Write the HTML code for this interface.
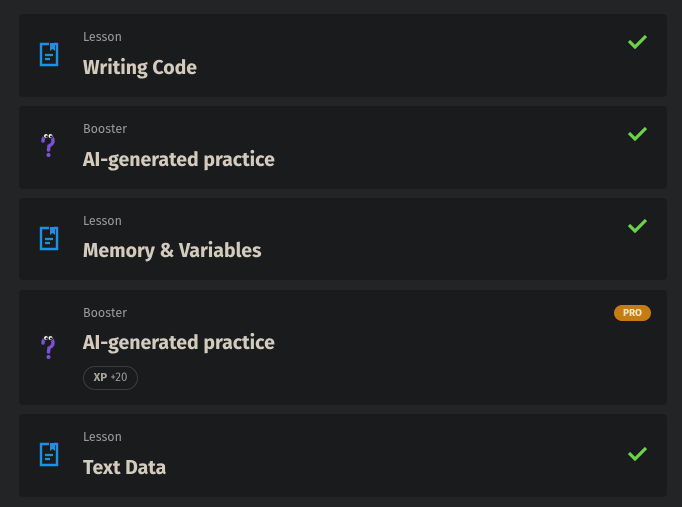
<!DOCTYPE html>
<html><head><style>
body{margin:0;background:#232426;width:682px;height:507px;overflow:hidden;font-family:"Fira Sans","Liberation Sans",sans-serif;position:relative}
.c{position:absolute;left:19px;width:648px;background:#1a1b1d;border-radius:4px}
.lab{position:absolute;left:64px;font-size:12.5px;color:#9a9a98}
.t{position:absolute;left:64px;font-size:19.5px;font-weight:bold;color:#d3cbbd;letter-spacing:0}
.ic{position:absolute;left:20px}
.ck{position:absolute;right:18px}
</style></head><body>
<svg width="0" height="0" style="position:absolute"><defs>
<g id="doc"><path d="M3 2 H10 M15 2 H18 V23 H2 V2 H3" fill="none" stroke="#1e90e0" stroke-width="2.4"/><path d="M11 1 H16 V9 L13.5 7 L11 9 Z" fill="#1e90e0"/><path d="M6 13 H14 M6 17 H11" stroke="#1e90e0" stroke-width="2.2"/></g>
<g id="q"><path d="M4 9 Q4 4 9 4 Q14 4 14 9 Q14 12 10 14 L9.5 18" fill="none" stroke="#7e4fd8" stroke-width="3.4" stroke-linecap="round"/><circle cx="9.5" cy="23" r="2" fill="#7e4fd8"/><ellipse cx="7" cy="4" rx="2.4" ry="2.4" fill="#fff" stroke="#222" stroke-width="1"/><ellipse cx="11.5" cy="4" rx="2.4" ry="2.4" fill="#fff" stroke="#222" stroke-width="1"/><circle cx="7.5" cy="4.5" r="1" fill="#111"/><circle cx="12" cy="4.5" r="1" fill="#111"/></g>
<g id="chk"><path d="M2 9 L8 15 L19 4" fill="none" stroke="#6ad34a" stroke-width="3.2"/></g>
</defs></svg>

<div class="c" style="top:14px;height:83px">
<svg class="ic" style="top:28px" width="20" height="26"><use href="#doc"/></svg>
<div class="lab" style="top:16px">Lesson</div><div class="t" style="top:43px">Writing Code</div>
<svg class="ck" style="top:18px" width="22" height="18"><use href="#chk"/></svg></div>

<div class="c" style="top:106px;height:83px">
<svg class="ic" style="top:26px" width="20" height="28"><use href="#q"/></svg>
<div class="lab" style="top:16px">Booster</div><div class="t" style="top:43px">AI-generated practice</div>
<svg class="ck" style="top:18px" width="22" height="18"><use href="#chk"/></svg></div>

<div class="c" style="top:198px;height:82px">
<svg class="ic" style="top:28px" width="20" height="26"><use href="#doc"/></svg>
<div class="lab" style="top:16px">Lesson</div><div class="t" style="top:42px">Memory &amp; Variables</div>
<svg class="ck" style="top:18px" width="22" height="18"><use href="#chk"/></svg></div>

<div class="c" style="top:290px;height:115px">
<svg class="ic" style="top:44px" width="20" height="28"><use href="#q"/></svg>
<div class="lab" style="top:16px">Booster</div><div class="t" style="top:42px">AI-generated practice</div>
<div style="position:absolute;left:64px;top:76px;width:53px;height:22px;border:1px solid #3c3d3f;border-radius:12px;font-size:11.5px;color:#9a9a98;line-height:22px;text-align:center"><b style="color:#a8a49a">XP</b> +20</div>
<div style="position:absolute;right:16px;top:15px;width:37px;height:16px;background:#c47d12;border-radius:8px;color:#f5e6c8;font-size:10px;font-weight:bold;text-align:center;line-height:16px">PRO</div></div>

<div class="c" style="top:414px;height:83px">
<svg class="ic" style="top:28px" width="20" height="26"><use href="#doc"/></svg>
<div class="lab" style="top:16px">Lesson</div><div class="t" style="top:43px">Text Data</div>
<svg class="ck" style="top:30px" width="22" height="18"><use href="#chk"/></svg></div>
</body></html>
